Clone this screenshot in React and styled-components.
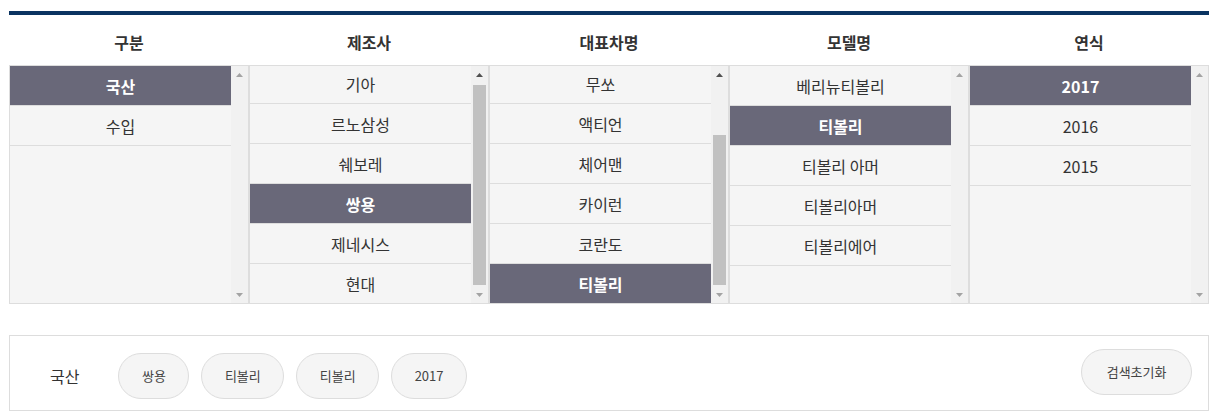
import React, { useLayoutEffect, useRef } from "react"
import styled, { createGlobalStyle } from "styled-components"

const ROW = 40
const VIEW = 237
const BTN = 17

const columns = [
    { title: "구분", items: ["국산", "수입"], selected: "국산" },
    { title: "제조사", items: ["기아", "르노삼성", "쉐보레", "쌍용", "제네시스", "현대"], selected: "쌍용", scroll: 2 },
    { title: "대표차명", items: ["렉스턴", "로디우스", "무쏘", "액티언", "체어맨", "카이런", "코란도", "티볼리"], selected: "티볼리", scroll: 82 },
    { title: "모델명", items: ["베리뉴티볼리", "티볼리", "티볼리 아머", "티볼리아머", "티볼리에어"], selected: "티볼리" },
    { title: "연식", items: ["2017", "2016", "2015"], selected: "2017" },
]

const tags = ["쌍용", "티볼리", "티볼리", "2017"]

const GlobalStyle = createGlobalStyle`
html, body {
    margin : 0;
    padding : 0;
    background : #fff;
}
body {
    font-family : "Noto Sans CJK KR", "Noto Sans", sans-serif;
    color : #333;
}`

function Arrow({ down, on }) {
    return (
        <ArrowBtn $on={on}>
            <svg width="7" height="4" viewBox="0 0 7 4">
                <polygon points={down ? "0,0 7,0 3.5,4" : "0,4 7,4 3.5,0"} fill="currentColor" />
            </svg>
        </ArrowBtn>
    )
}

function ScrollBar({ count, scroll }) {
    const content = count * ROW
    const track = VIEW - BTN * 2
    const scrollable = content > VIEW
    const thumb = scrollable ? {
        marginTop: (track * scroll) / content,
        height: (track * VIEW) / content,
    } : null
    return (
        <Bar>
            <Arrow on={scrollable && scroll > 0} />
            <Track>{thumb && <Thumb style={thumb} />}</Track>
            <Arrow down />
        </Bar>
    )
}

function Column({ items, selected, scroll = 0 }) {
    const listRef = useRef(null)
    useLayoutEffect(() => {
        if (listRef.current) listRef.current.scrollTop = scroll
    }, [scroll])
    return (
        <Panel>
            <List ref={listRef}>
                {items.map(item => (
                    <Item key={item} $active={item === selected}>{item}</Item>
                ))}
            </List>
            <ScrollBar count={items.length} scroll={scroll} />
        </Panel>
    )
}

export default function App() {
    return (
        <Page>
            <GlobalStyle />
            <Selector>
                <Heads>
                    {columns.map(col => <Head key={col.title}>{col.title}</Head>)}
                </Heads>
                <Panels>
                    {columns.map(col => <Column key={col.title} {...col} />)}
                </Panels>
            </Selector>
            <Summary>
                <Chosen>
                    <Origin>국산</Origin>
                    <Tags>
                        {tags.map((t, i) => <Tag key={i}>{t}</Tag>)}
                    </Tags>
                </Chosen>
                <Reset type="button">검색초기화</Reset>
            </Summary>
        </Page>
    )
}

const Page = styled.div`
width : 1200px;
padding : 11px 0 0 9px;`

const Selector = styled.section`
border-top : 4px solid #0a3361;`

const Heads = styled.div`
display : grid;
grid-template-columns : repeat(5, 240px);
height : 50px;
align-items : center;`

const Head = styled.h3`
margin : 0;
padding-top : 4px;
font-size : 16px;
font-weight : 700;
line-height : 24px;
text-align : center;
color : #333;`

const Panels = styled.div`
display : grid;
grid-template-columns : repeat(5, 240px);`

const Panel = styled.div`
display : flex;
height : ${VIEW}px;
border : 1px solid #ddd;
background : #f5f5f5;`

const List = styled.ul`
flex : 1;
margin : 0;
padding : 0;
list-style : none;
overflow : hidden;`

const Item = styled.li`
height : 37px;
padding-top : 2px;
line-height : 37px;
border-bottom : 1px solid #ddd;
text-align : center;
font-size : 16px;
background : ${p => p.$active ? "#696879" : "#f5f5f5"};
color : ${p => p.$active ? "#fff" : "#333"};
font-weight : ${p => p.$active ? 700 : 400};`

const Bar = styled.div`
flex : none;
width : ${BTN}px;
display : flex;
flex-direction : column;
background : #f1f1f1;`

const ArrowBtn = styled.div`
height : ${BTN}px;
display : flex;
align-items : center;
justify-content : center;
color : ${p => p.$on ? "#505050" : "#a3a3a3"};
svg { display : block; }`

const Track = styled.div`
flex : 1;
padding : 0 2px;`

const Thumb = styled.div`
background : #c1c1c1;`

const Summary = styled.div`
margin-top : 31px;
height : 74px;
border : 1px solid #ddd;
display : flex;
align-items : center;
padding : 0 16px 0 40px;`

const Chosen = styled.div`
display : flex;
align-items : center;
margin-top : 5px;`

const Origin = styled.span`
font-size : 16px;
color : #333;
margin-right : 39px;`

const Tags = styled.div`
display : flex;
gap : 12px;`

const Tag = styled.span`
box-sizing : border-box;
height : 46px;
padding : 0 22.5px;
display : flex;
align-items : center;
border : 1px solid #ddd;
border-radius : 23px;
background : #f5f5f5;
font-size : 13px;
color : #444;`

const Reset = styled.button`
margin : 0 0 3px auto;
box-sizing : border-box;
height : 46px;
padding : 0 24.5px;
border : 1px solid #ddd;
border-radius : 23px;
background : #f5f5f5;
font-family : inherit;
font-size : 13px;
color : #444;
cursor : pointer;`
